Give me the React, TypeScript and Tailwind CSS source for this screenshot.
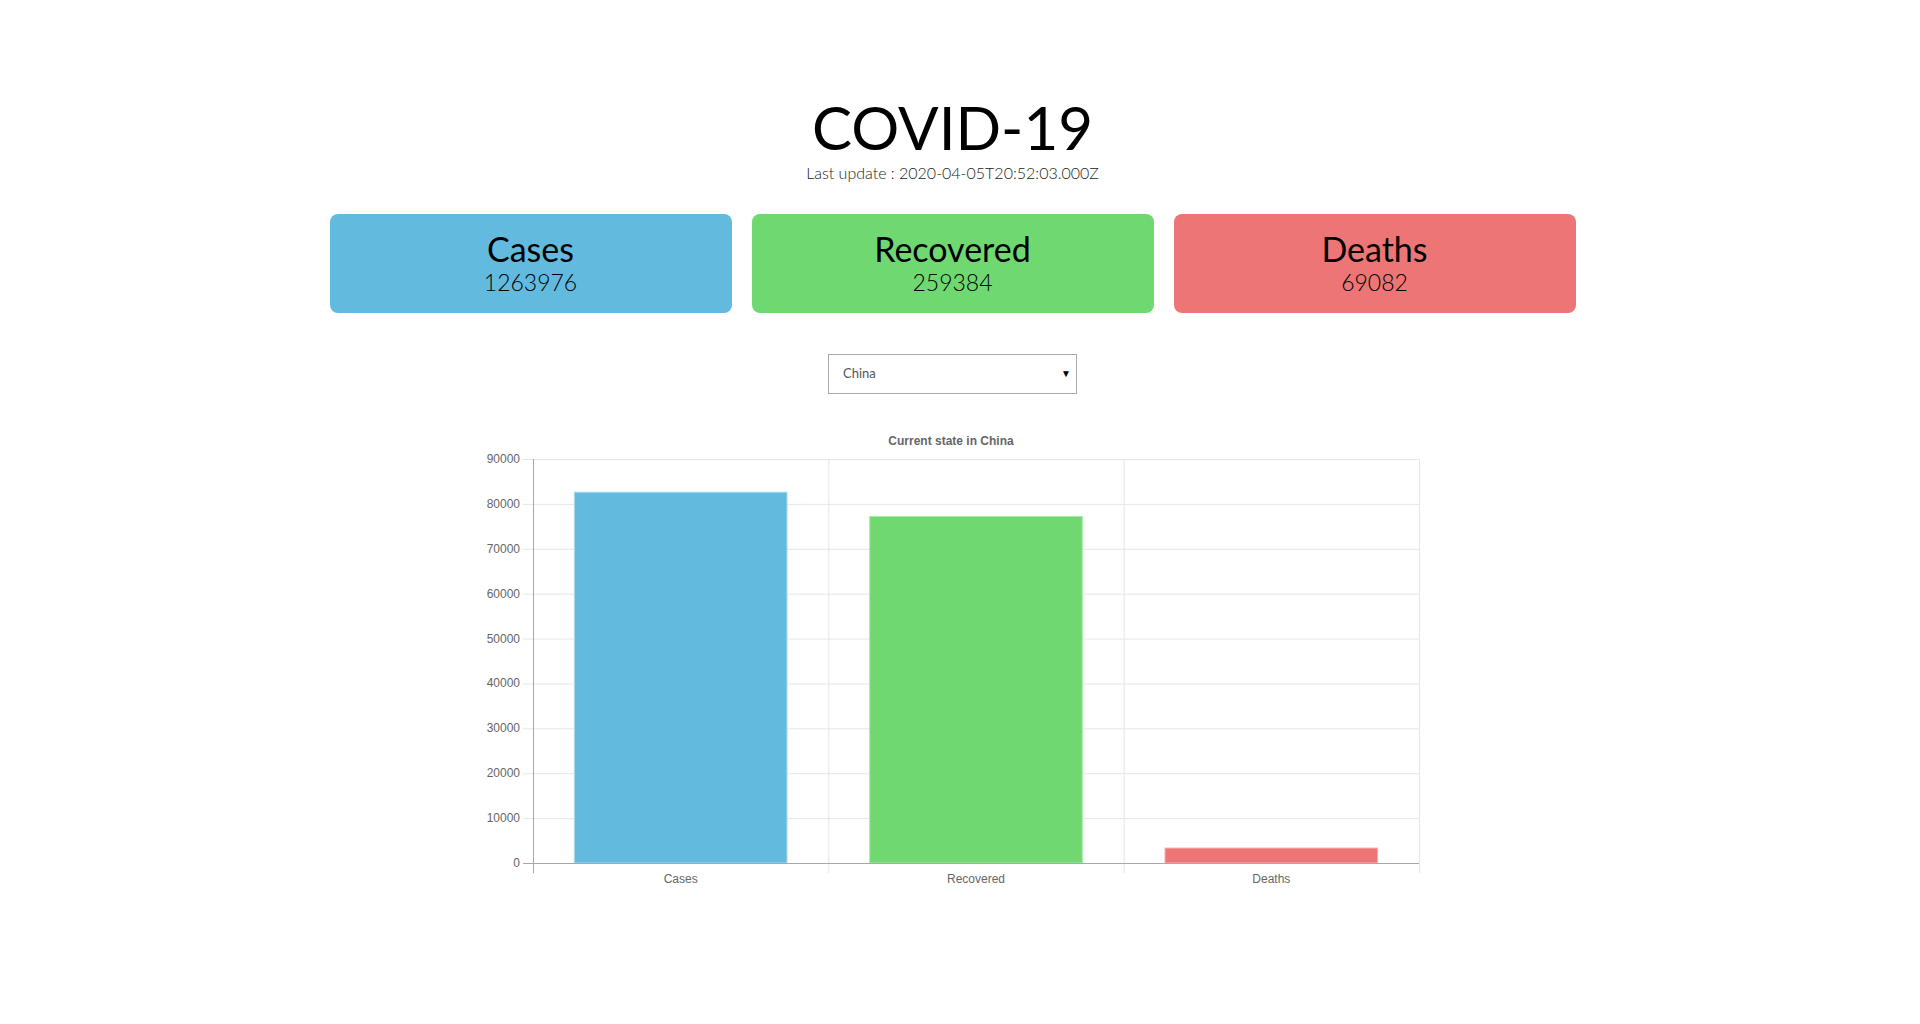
import { useState } from 'react';

const stats = [
  { label: 'Cases', value: 1263976, bg: 'bg-[#62bbdf]' },
  { label: 'Recovered', value: 259384, bg: 'bg-[#6fd871]' },
  { label: 'Deaths', value: 69082, bg: 'bg-[#ed7575]' },
];

const china = [
  { label: 'Cases', value: 82602, fill: '#62bbdf', stroke: '#a6daef' },
  { label: 'Recovered', value: 77207, fill: '#6fd871', stroke: '#a9ebaa' },
  { label: 'Deaths', value: 3333, fill: '#ed7575', stroke: '#f6b0b0' },
];

function BarChart({ country }: { country: string }) {
  const left = 50;
  const right = 936;
  const top = 33;
  const bottom = 437;
  const max = 90000;
  const step = (right - left) / china.length;
  const barW = step * 0.72;
  const y = (v: number) => bottom - (v / max) * (bottom - top);
  const ticks = [0, 10000, 20000, 30000, 40000, 50000, 60000, 70000, 80000, 90000];

  return (
    <svg width="940" height="470" viewBox="0 0 940 470" className="block">
      <text x="468" y="19" textAnchor="middle" fontSize="12" fontWeight="bold" fill="#666" fontFamily="Liberation Sans, Arial, sans-serif">
        Current state in {country}
      </text>
      {ticks.map((t) => (
        <g key={t}>
          <line x1={40} x2={right} y1={y(t) + 0.5} y2={y(t) + 0.5} stroke={t === 0 ? '#a8a8a8' : '#e6e6e6'} />
          <text x="37" y={y(t) + 4} textAnchor="end" fontSize="12" fill="#666" fontFamily="Liberation Sans, Arial, sans-serif">
            {t}
          </text>
        </g>
      ))}
      {[0, 1, 2, 3].map((i) => (
        <line key={i} x1={left + i * step + 0.5} x2={left + i * step + 0.5} y1={top} y2={bottom + 10} stroke={i === 0 ? '#a8a8a8' : '#e6e6e6'} />
      ))}
      {china.map((d, i) => {
        const cx = left + step * i + step / 2;
        return (
          <g key={d.label}>
            <rect x={cx - barW / 2} y={y(d.value)} width={barW} height={bottom - y(d.value)} fill={d.fill} stroke={d.stroke} strokeWidth="1" />
            <text x={cx} y={bottom + 20} textAnchor="middle" fontSize="12" fill="#666" fontFamily="Liberation Sans, Arial, sans-serif">
              {d.label}
            </text>
          </g>
        );
      })}
      <line x1={40} x2={right} y1={bottom + 0.5} y2={bottom + 0.5} stroke="#a8a8a8" />
    </svg>
  );
}

export default function App() {
  const [country, setCountry] = useState('China');

  return (
    <div className="min-h-screen bg-white pr-[15px] text-black" style={{ fontFamily: 'Lato, "Open Sans", sans-serif' }}>
      <div className="flex flex-col items-center pt-[98px]">
        <h1 className="text-[60px] leading-[58px] font-normal">COVID-19</h1>
        <p className="mt-[7px] text-[16px] leading-[20px] font-light text-[#222]">Last update : 2020-04-05T20:52:03.000Z</p>

        <div className="mt-[31px] flex gap-[20px]">
          {stats.map((s) => (
            <div key={s.label} className={`${s.bg} w-[402px] h-[99px] rounded-[8px] flex flex-col items-center pt-[16px]`}>
              <div className="text-[34px] leading-[38px]">{s.label}</div>
              <div className="text-[23px] leading-[28px] font-light text-black">{s.value}</div>
            </div>
          ))}
        </div>

        <div className="relative mt-[41px] w-[249px]">
          <select
            value={country}
            onChange={(e) => setCountry(e.target.value)}
            className="appearance-none w-full h-[40px] border border-[#aaa] bg-white pl-[14px] text-[13px] text-[#555] outline-none"
          >
            <option>China</option>
            <option>Italy</option>
            <option>Spain</option>
            <option>US</option>
          </select>
          <span className="pointer-events-none absolute right-[6px] top-[12px] text-[10px] text-black">▼</span>
        </div>

        <div className="mt-[32px]">
          <BarChart country={country} />
        </div>
      </div>
    </div>
  );
}
